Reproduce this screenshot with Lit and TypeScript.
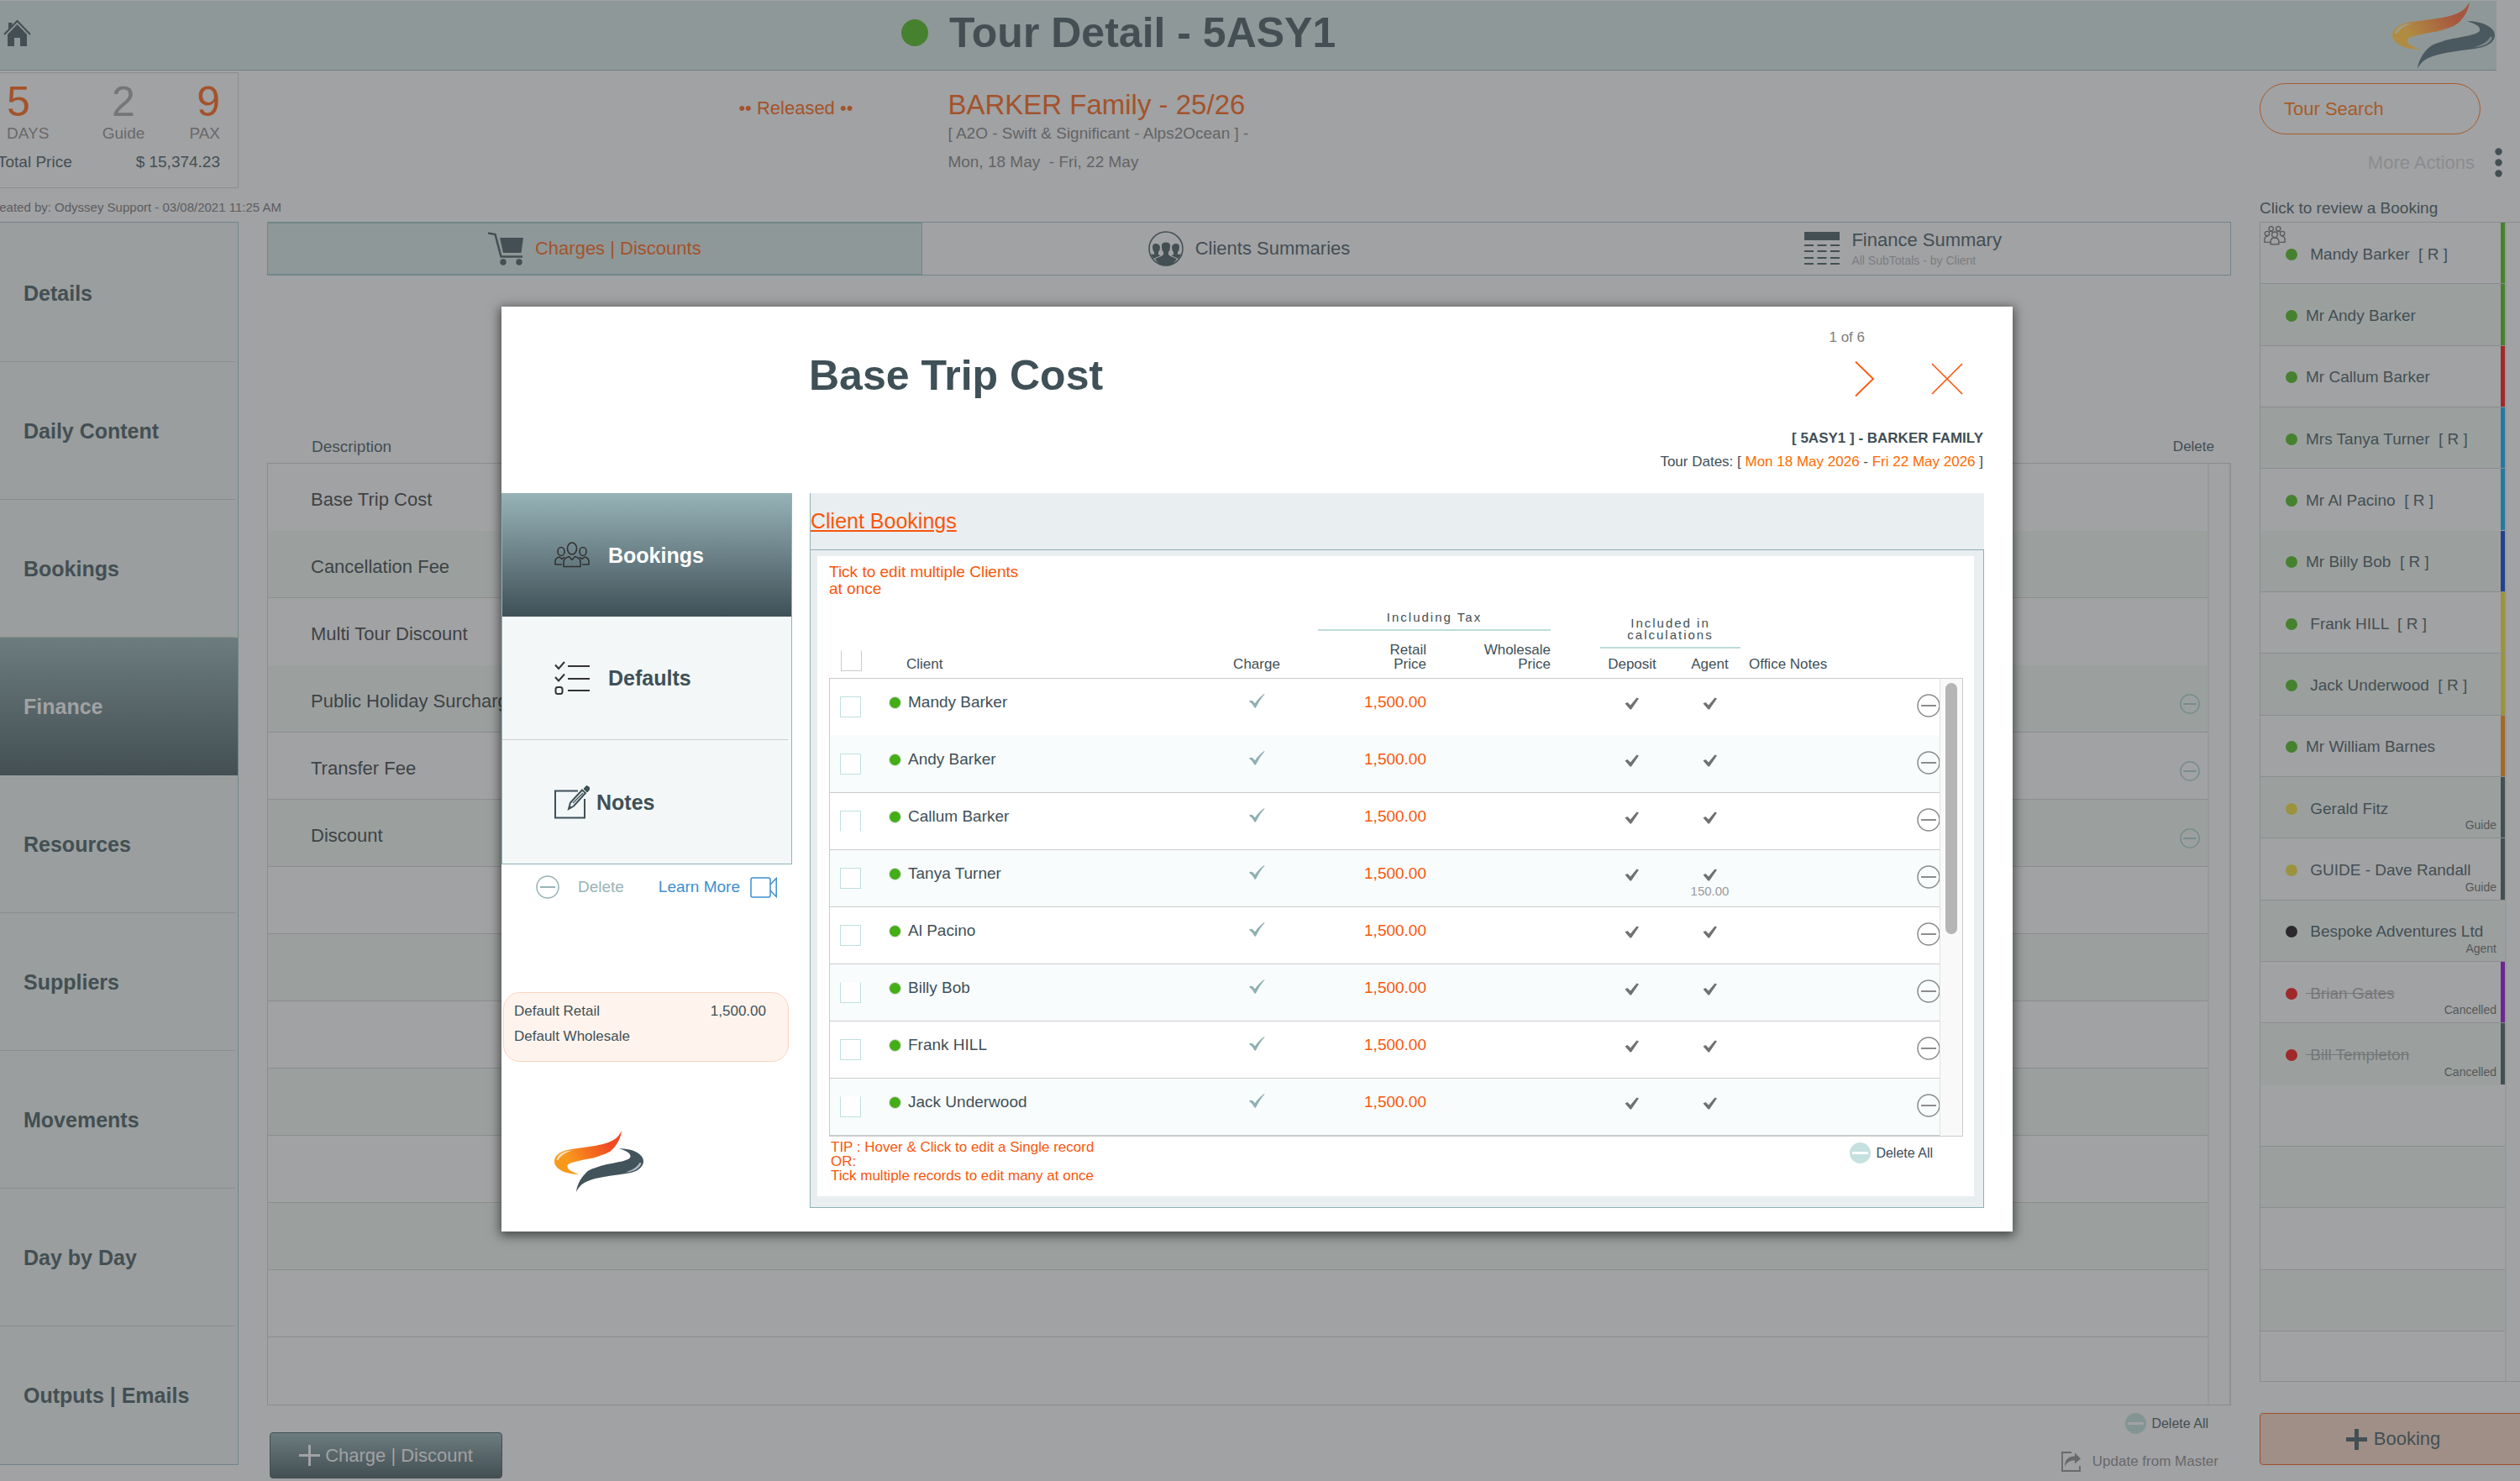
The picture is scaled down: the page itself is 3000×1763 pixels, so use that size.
import { LitElement, html, css, svg, nothing } from "lit";
import { customElement, property } from "lit/decorators.js";
import { classMap } from "lit/directives/class-map.js";
import { styleMap } from "lit/directives/style-map.js";

interface Person {
  name: string;
  dot: string;
  bar?: string;
  note?: string;
  struck?: boolean;
  open?: boolean;
}

interface Charge {
  name: string;
  removable?: boolean;
}

interface Booking {
  name: string;
  agentFee?: string;
  box?: string;
}

const GREEN = "#46812f";
const YELLOW = "#9c933f";
const SLATE = "#434f53";
const RED = "#9f292b";
const SKY = "#27789f";

const SECTIONS = [
  "Details",
  "Daily Content",
  "Bookings",
  "Finance",
  "Resources",
  "Suppliers",
  "Movements",
  "Day by Day",
  "Outputs | Emails",
];

const CHARGES: Charge[] = [
  { name: "Base Trip Cost" },
  { name: "Cancellation Fee" },
  { name: "Multi Tour Discount" },
  { name: "Public Holiday Surcharge", removable: true },
  { name: "Transfer Fee", removable: true },
  { name: "Discount", removable: true },
  ...Array.from({ length: 8 }, () => ({ name: "" })),
];

const PEOPLE: Person[] = [
  { name: "\u00a0Mandy Barker  [ R ]", dot: GREEN, bar: GREEN },
  { name: "Mr Andy Barker", dot: GREEN, bar: GREEN },
  { name: "Mr Callum Barker", dot: GREEN, bar: RED },
  { name: "Mrs Tanya Turner  [ R ]", dot: GREEN, bar: SKY },
  { name: "Mr Al Pacino  [ R ]", dot: GREEN, bar: SKY, open: true },
  { name: "Mr Billy Bob  [ R ]", dot: GREEN, bar: "#24428b" },
  { name: "\u00a0Frank HILL  [ R ]", dot: GREEN, bar: YELLOW },
  { name: "\u00a0Jack Underwood  [ R ]", dot: GREEN, bar: YELLOW },
  { name: "Mr William Barnes", dot: GREEN, bar: "#a16a28" },
  { name: "\u00a0Gerald Fitz", dot: YELLOW, bar: SLATE, note: "Guide" },
  { name: "\u00a0GUIDE - Dave Randall", dot: YELLOW, bar: SLATE, note: "Guide" },
  { name: "\u00a0Bespoke Adventures Ltd", dot: "#2b292d", note: "Agent" },
  { name: "\u00a0Brian Gates", dot: RED, bar: "#6b278f", note: "Cancelled", struck: true },
  { name: "\u00a0Bill Templeton", dot: RED, bar: SLATE, note: "Cancelled", struck: true, open: true },
];

const BOOKINGS: Booking[] = [
  { name: "Mandy Barker" },
  { name: "Andy Barker" },
  { name: "Callum Barker", box: "no-bottom" },
  { name: "Tanya Turner", agentFee: "150.00" },
  { name: "Al Pacino" },
  { name: "Billy Bob", box: "no-top" },
  { name: "Frank HILL" },
  { name: "Jack Underwood", box: "no-top" },
];

const minusIcon = (size: number) => html`
  <svg class="icon" width=${size} height=${size} viewBox="0 0 28 28" fill="none" stroke="currentColor" stroke-width="1.5" aria-hidden="true">
    <circle cx="14" cy="14" r="13" />
    <path d="M5 14H23" stroke-width="2" />
  </svg>`;

const minusDisc = (line: string) => html`
  <svg class="icon" width="25" height="25" viewBox="0 0 25 25" aria-hidden="true">
    <circle cx="12.5" cy="12.5" r="12.5" fill="currentColor" />
    <path d="M3 12.5H22" stroke=${line} stroke-width="3" />
  </svg>`;

const plusIcon = (w: number) => html`
  <svg class="icon" width="25" height="25" viewBox="0 0 25 25" stroke="currentColor" stroke-width=${w} aria-hidden="true">
    <path d="M12.5 0V25M0 12.5H25" />
  </svg>`;

const tickLight = html`
  <svg class="icon" width="19" height="17" viewBox="0 0 19 17" aria-hidden="true">
    <path fill="#8fb0b3" d="M0 9C1 7.200 3 7.500 4.200 8.300L7 11.200C10 7 14 2.500 18 0C18.500 0 18.600 0.600 18.200 1C14 5.500 11 10.500 8 16.500C7 17.200 6.500 16.500 6 15.800C4.500 13 3 11 0 9Z" />
  </svg>`;

const tickDark = html`
  <svg class="icon" width="18" height="15" viewBox="0 0 18 15" aria-hidden="true">
    <path fill="#6f7173" d="M0.500 7.500L3.500 6L7 9.500L14.500 0.500L17 1.500L8 14.500H6.500Z" />
  </svg>`;

const groupOutline = (w: number) => svg`
  <g fill="none" stroke="currentColor" stroke-width=${w} stroke-linejoin="round">
    <ellipse cx="21" cy="8" rx="5.500" ry="7" />
    <path d="M11 29.500V24C11 20 14 18.500 17.500 17.500L21 21.500L24.500 17.500C28 18.500 31 20 31 24V29.500Z" />
    <ellipse cx="8" cy="11.500" rx="4" ry="5" />
    <path d="M9 27H1V23C1 20 3 19 6 18L9 20.500L12 18" />
    <ellipse cx="34" cy="11.500" rx="4" ry="5" />
    <path d="M33 27H41V23C41 20 39 19 36 18L33 20.500L30 18" />
  </g>`;

@customElement("swoosh-logo")
export class SwooshLogo extends LitElement {
  @property({ type: Boolean }) dim = false;

  static styles = css`
    :host {
      display: block;
    }
    svg {
      display: block;
      width: 100%;
      height: 100%;
    }
  `;

  render() {
    const [a, b, c, shine] = this.dim
      ? ["#b08c42", "#a6563f", "#4a5960", "#9ba5a5"]
      : ["#f9991c", "#f04a23", "#43535c", "#ffffff"];
    const blade =
      "M80 0C78 4 75 8.500 70 11C62 15.500 52 17 40 19C30 20.500 20 21.500 14 23C6 25 0 30 0 36C0 45 14 51.500 29 51C23 49 15 46.500 15.500 41.500C16 38 24 36.500 33 34.500C42 32.500 48 32 54 29.500C60 27.500 64 26.500 68 23C73 18.500 79 10 80 0Z";
    const slit = "M2.500 34C4 28 11 23.500 22 23C14 25.500 8 28.500 4.500 34.500Z";
    return html`
      <svg viewBox="0 0 106 72" preserveAspectRatio="none" role="img" aria-label="Logo">
        <defs>
          <linearGradient id="warm" x1="0" x2="1" y1="0.600" y2="0.200">
            <stop offset="0.150" stop-color=${a} />
            <stop offset="0.800" stop-color=${b} />
          </linearGradient>
        </defs>
        <path d=${blade} fill="url(#warm)" />
        <path d=${slit} fill=${shine} opacity="0.700" />
        <g transform="rotate(180 53 36)">
          <path d=${blade} fill=${c} />
          <path d=${slit} fill=${shine} opacity="0.600" />
        </g>
      </svg>`;
  }
}

@customElement("charge-dialog")
export class ChargeDialog extends LitElement {
  static styles = css`
    :host {
      display: block;
      background: #ffffff;
      color: #3f5057;
      font: 17px/28px "Liberation Sans", Arial, sans-serif;
      box-shadow: 0 3px 12px 2px rgba(0, 0, 0, 0.55);
    }
    * {
      box-sizing: border-box;
    }
    button,
    input {
      font: inherit;
      color: inherit;
      margin: 0;
    }
    button {
      background: none;
      border: 0;
      padding: 0;
      cursor: pointer;
    }
    a {
      color: inherit;
    }
    p,
    h2,
    h3 {
      margin: 0;
    }
    .icon {
      display: block;
      flex: none;
    }
    .head {
      display: flex;
      justify-content: space-between;
      padding: 27px 35px 23px 366px;
    }
    .title {
      font-size: 50px;
      line-height: 60px;
      padding-top: 25px;
    }
    .side {
      display: flex;
      flex-direction: column;
      align-items: flex-end;
    }
    .count {
      color: #7d7d7d;
      line-height: 20px;
      padding-right: 141px;
    }
    .tools {
      display: flex;
      align-items: center;
      gap: 67px;
      color: #f9560b;
      padding: 18px 24px 36px 0;
    }
    .date {
      color: #ff6a00;
    }
    .body {
      display: grid;
      grid-template-columns: 346px minmax(0, 1fr);
      gap: 21px;
      padding: 0 34px 28px 0;
    }
    .menu {
      display: grid;
      grid-auto-rows: 147px;
      background: #f3f7f8;
      border: 1px solid #8fb3b8;
      border-top: 0;
    }
    .menu a {
      display: flex;
      align-items: center;
      gap: 22px;
      padding-left: 62px;
      font-size: 25px;
      font-weight: bold;
      text-decoration: none;
    }
    .menu a.active {
      color: #ffffff;
      background: linear-gradient(#97b3b8, #3f5057);
    }
    .menu a.active .icon,
    .menu .ink {
      color: #333333;
    }
    .menu a.ruled {
      border-bottom: 1px solid #cdcfd1;
      margin-right: 4px;
    }
    .menu a.near {
      gap: 8px;
    }
    .links {
      display: flex;
      align-items: center;
      padding: 13px 18px 0 41px;
      font-size: 19px;
      color: #98b4b6;
    }
    .links button {
      display: flex;
      align-items: center;
      gap: 22px;
    }
    .links a {
      display: flex;
      align-items: center;
      gap: 12px;
      margin-left: auto;
      color: #3d8fcf;
      text-decoration: none;
    }
    .defaults {
      display: grid;
      grid-template-columns: 1fr auto;
      margin: 111px 4px 0 2px;
      padding: 7px 26px 14px 12px;
      line-height: 30px;
      background: #fff4ed;
      border: 1px solid #fad4c2;
      border-radius: 20px;
    }
    .logo {
      width: 106px;
      height: 73px;
      margin: 82px 0 0 63px;
    }
    .panel {
      background: #e9eef1;
      border-left: 1px solid #8fb0b3;
    }
    .bar {
      font-size: 25px;
      font-weight: normal;
      line-height: 67px;
      color: #f9560b;
      text-decoration: underline;
      text-underline-offset: 2px;
    }
    .frame {
      border: solid #8fb0b3;
      border-width: 1px 1px 1px 0;
      padding: 7px 11px 13px 8px;
    }
    .sheet {
      background: #ffffff;
      padding: 9px 13px 16px 14px;
    }
    .hint {
      font-size: 19px;
      line-height: 20px;
      color: #f9560b;
    }
    .listing {
      display: grid;
      grid-template-columns: minmax(0, 1fr) 28px;
    }
    table,
    thead {
      display: block;
    }
    tr {
      display: grid;
      grid-template-columns: 68px minmax(0, 1fr) 92px 156px 148px 143px 93px 200px 27px;
    }
    th,
    td {
      display: block;
      padding: 0;
      text-align: left;
      font-weight: normal;
    }
    thead tr {
      grid-template-rows: 40px 56px;
      line-height: 17px;
    }
    thead th {
      grid-row: 2;
      align-self: end;
      padding-bottom: 8px;
    }
    thead .group {
      grid-row: 1;
      align-self: end;
      font-size: 15px;
      line-height: 14px;
      letter-spacing: 2px;
      text-align: center;
      padding-bottom: 7px;
      border-bottom: 2px solid #bcdcda;
    }
    .tax {
      grid-column: 4 / 6;
      margin-left: 27px;
    }
    thead .calc {
      grid-column: 6 / 8;
      grid-row: 1 / 3;
      align-self: start;
      margin: 24px 10px 0 59px;
    }
    .c1 {
      grid-column: 1;
    }
    .c2 {
      grid-column: 2;
    }
    .c3 {
      grid-column: 3;
    }
    .c4 {
      grid-column: 4;
    }
    .c5 {
      grid-column: 5;
    }
    .c6 {
      grid-column: 6;
    }
    .c7 {
      grid-column: 7;
    }
    .c8 {
      grid-column: 8;
    }
    .client {
      display: flex;
      align-items: center;
      gap: 9px;
    }
    thead .client {
      padding-left: 24px;
    }
    .mid {
      text-align: center;
    }
    .end {
      text-align: right;
    }
    .dep {
      padding-left: 51px;
    }
    tbody {
      display: grid;
      grid-auto-rows: 68px;
      border: 1px solid #cbcbcb;
      border-right: 0;
    }
    tbody tr {
      border-bottom: 1px solid #cbcbcb;
      font-size: 19px;
      line-height: 24px;
    }
    tbody tr:nth-child(even) {
      background: #f8fcfd;
    }
    tbody tr:first-child {
      border-bottom-color: #f8fcfd;
    }
    tbody td,
    tbody th {
      padding-top: 16px;
    }
    tbody .client {
      align-self: start;
      padding-left: 3px;
    }
    .dot {
      width: 13px;
      height: 13px;
      border-radius: 50%;
      background: #43ae16;
      box-shadow: 0 0 0 1px #d5ddd5;
    }
    .box {
      appearance: none;
      display: block;
      width: 25px;
      height: 25px;
      border: 1px solid #bfe0de;
      background: #ffffff;
      margin: 5px 0 0 12px;
    }
    thead .box {
      border-color: #cbcbcb;
      margin: 0 0 0 14px;
    }
    .no-top,
    thead .no-top {
      border-top-color: transparent;
    }
    .no-bottom {
      border-bottom-color: transparent;
    }
    .charge .icon,
    .dark .icon {
      margin: 0 auto;
    }
    tbody .charge {
      padding-top: 18px;
    }
    tbody .dark {
      padding-top: 22px;
    }
    .price {
      color: #f9560b;
    }
    .fee {
      display: block;
      margin-top: 4px;
      font-size: 15px;
      line-height: 16px;
      text-align: center;
      color: #9a9a9a;
    }
    tbody .del {
      overflow: hidden;
      color: #8c8c8c;
      padding-top: 18px;
    }
    .track {
      margin-top: 96px;
      padding: 5px 6px;
      background: #f9f9f9;
      border: 1px solid #cbcbcb;
      border-left-color: #e2e2e2;
    }
    .thumb {
      height: 56%;
      border-radius: 7px;
      background: #b5b5b5;
    }
    .foot {
      display: flex;
      justify-content: space-between;
      align-items: flex-start;
      padding: 4px 36px 0 2px;
    }
    .tip {
      line-height: 17px;
      color: #f9560b;
    }
    .all {
      display: flex;
      align-items: center;
      gap: 6px;
      padding-top: 3px;
      font-size: 16px;
      line-height: 25px;
      color: #3b4c5b;
    }
    .all .icon {
      color: #c5e1df;
    }
  `;

  render() {
    return html`
      <header class="head">
        <h2 class="title">Base Trip Cost</h2>
        <div class="side">
          <p class="count">1 of 6</p>
          <div class="tools">
            <button aria-label="Next charge">
              <svg class="icon" width="24" height="42" viewBox="0 0 24 42" fill="none" stroke="currentColor" stroke-width="1.800"><path d="M1 0.500L22 21L1 41.500" /></svg>
            </button>
            <button aria-label="Close">
              <svg class="icon" width="38" height="38" viewBox="0 0 38 38" fill="none" stroke="currentColor" stroke-width="1.600"><path d="M1 1L37 37M37 1L1 37" /></svg>
            </button>
          </div>
          <strong>[ 5ASY1 ] - BARKER FAMILY</strong>
          <p>Tour Dates: [ <span class="date">Mon 18 May 2026</span> - <span class="date">Fri 22 May 2026</span> ]</p>
        </div>
      </header>
      <div class="body">
        <aside>
          <nav class="menu" aria-label="Charge sections">
            <a class="active" href="#bookings">
              <svg class="icon" width="42" height="31" viewBox="0 0 42 31" aria-hidden="true">${groupOutline(1.6)}</svg>
              Bookings
            </a>
            <a class="ruled" href="#defaults">
              <svg class="icon ink" width="42" height="40" viewBox="0 0 42 40" fill="none" stroke="currentColor" stroke-width="2" aria-hidden="true">
                <path d="M16 6H42M16 21H42M16 35H42" stroke-width="2.200" />
                <path d="M1 4.500L5 9L12 1M1 19L5 23.500L12 15.500" />
                <rect x="1.500" y="31" width="8" height="8" rx="2.500" />
              </svg>
              Defaults
            </a>
            <a class="near" href="#notes">
              <svg class="icon" width="42" height="40" viewBox="0 0 42 40" fill="none" stroke="currentColor" aria-hidden="true">
                <path d="M28 6.500H1V38.500H36V16" stroke-width="2" />
                <path d="M17 28L19 20.500L33 5.500L37 9L23 24.500Z" stroke-width="2" />
                <path d="M22 21L34 9" stroke-width="1.200" />
                <path d="M17 28L18 24L20.500 26.500Z" fill="currentColor" />
                <path d="M35 4L38 0.500Q42 1 42 4.500L39 8Z" fill="currentColor" />
              </svg>
              Notes
            </a>
          </nav>
          <div class="links">
            <button>${minusIcon(28)}Delete</button>
            <a href="#learn">Learn More
              <svg class="icon" width="32" height="25" viewBox="0 0 32 25" fill="none" stroke="currentColor" stroke-width="1.500" aria-hidden="true">
                <rect x="1" y="1" width="23" height="23" rx="2" />
                <path d="M24 9L31.200 1.500V23.500L24 16" />
              </svg>
            </a>
          </div>
          <div class="defaults">
            <span>Default Retail</span><span>1,500.00</span>
            <span>Default Wholesale</span>
          </div>
          <swoosh-logo class="logo"></swoosh-logo>
        </aside>
        <section class="panel">
          <h3 class="bar">Client Bookings</h3>
          <div class="frame">
            <div class="sheet">
              <p class="hint">Tick to edit multiple Clients<br />at once</p>
              <div class="listing">
                <table>
                  <thead>
                    <tr>
                      <th class="c1"><input class="box no-top" type="checkbox" aria-label="Select all clients" /></th>
                      <th class="c2 client">Client</th>
                      <th class="c3 mid">Charge</th>
                      <th class="group tax" scope="colgroup">Including Tax</th>
                      <th class="c4 end">Retail<br />Price</th>
                      <th class="c5 end">Wholesale<br />Price</th>
                      <th class="group calc" scope="colgroup">Included in calculations</th>
                      <th class="c6 mid dep">Deposit</th>
                      <th class="c7 mid">Agent</th>
                      <th class="c8">Office Notes</th>
                    </tr>
                  </thead>
                  <tbody>
                    ${BOOKINGS.map(
                      (b) => html`
                        <tr>
                          <td><input class="box ${b.box ?? ""}" type="checkbox" aria-label="Select ${b.name}" /></td>
                          <th class="client" scope="row"><span class="dot"></span>${b.name}</th>
                          <td class="charge">${tickLight}</td>
                          <td class="end price">1,500.00</td>
                          <td></td>
                          <td class="dark dep">${tickDark}</td>
                          <td class="dark">${tickDark}${b.agentFee ? html`<span class="fee">${b.agentFee}</span>` : nothing}</td>
                          <td></td>
                          <td class="del"><button aria-label="Remove ${b.name}">${minusIcon(28)}</button></td>
                        </tr>`
                    )}
                  </tbody>
                </table>
                <div class="track"><div class="thumb"></div></div>
              </div>
              <div class="foot">
                <p class="tip">TIP : Hover &amp; Click to edit a Single record<br />OR:<br />Tick multiple records to edit many at once</p>
                <button class="all">${minusDisc("#ffffff")}Delete All</button>
              </div>
            </div>
          </div>
        </section>
      </div>
    `;
  }
}

@customElement("app-root")
export class AppRoot extends LitElement {
  static styles = css`
    :host {
      display: block;
      background: #a1a2a4;
      color: #434f53;
      font: 19px/24px "Liberation Sans", Arial, sans-serif;
    }
    * {
      box-sizing: border-box;
    }
    button,
    input {
      font: inherit;
      color: inherit;
      margin: 0;
    }
    button {
      background: none;
      border: 0;
      padding: 0;
      cursor: pointer;
    }
    p,
    h1,
    h2,
    ul {
      margin: 0;
      padding: 0;
      font-weight: normal;
    }
    ul {
      list-style: none;
    }
    .icon {
      display: block;
      flex: none;
    }
    .page {
      position: relative;
      display: flex;
      flex-direction: column;
      min-height: 100vh;
      overflow: hidden;
    }
    .top {
      display: grid;
      grid-template-columns: 36fr 60fr auto;
      align-items: center;
      height: 83px;
      margin: 1px 28px 0 0;
      padding-right: 2px;
      background: #8f9898;
      border-bottom: 1px solid #6f8083;
    }
    .home {
      padding: 0 0 6px 4px;
      color: #434f53;
    }
    .heading {
      display: flex;
      align-items: center;
      gap: 25px;
      padding-bottom: 6px;
      margin-left: 5px;
      font-size: 50px;
      line-height: 60px;
      font-weight: bold;
    }
    .status {
      width: 32px;
      height: 32px;
      border-radius: 50%;
      background: #46812f;
    }
    .logo {
      width: 122px;
      height: 80px;
    }
    .cols {
      display: grid;
      grid-template-columns: 284px minmax(0, 1fr) 310px;
      column-gap: 34px;
    }
    .info {
      height: 180px;
    }
    .stats {
      display: grid;
      grid-template-columns: 113px 52px 1fr;
      margin-top: 2px;
      padding: 9px 21px 18px 8px;
      border: solid #8c8d8f;
      border-width: 1px 1px 1px 0;
      color: #68696b;
    }
    .num {
      font-size: 50px;
      line-height: 51px;
    }
    .hot {
      color: #a3532b;
    }
    .soft {
      color: #757678;
    }
    .c {
      text-align: center;
    }
    .r {
      text-align: right;
    }
    .total {
      grid-column: 1 / -1;
      display: flex;
      justify-content: space-between;
      margin: 10px 0 0 -11px;
      color: #434f53;
    }
    .made {
      display: flex;
      justify-content: flex-end;
      width: 335px;
      padding-top: 11px;
      font-size: 15px;
      color: #5c5d5f;
      white-space: nowrap;
    }
    .trip {
      display: grid;
      grid-template-columns: 30fr 70fr;
      color: #626466;
    }
    .released {
      text-align: right;
      font-size: 22px;
      padding: 33px 4px 0 0;
    }
    .about {
      padding: 21px 0 0 109px;
    }
    .about h2 {
      font-size: 33px;
      line-height: 40px;
      padding-bottom: 2px;
    }
    .about p {
      white-space: pre;
      padding-bottom: 10px;
    }
    .find {
      padding-top: 15px;
    }
    .search {
      display: block;
      width: 263px;
      height: 61px;
      padding: 0 28px;
      font-size: 22px;
      background: none;
      border: 1px solid #a65c29;
      border-radius: 31px;
    }
    .search::placeholder {
      color: #a65c29;
      opacity: 1;
    }
    .more {
      display: flex;
      align-items: center;
      gap: 24px;
      margin: 16px 0 0 auto;
      padding-right: 21px;
      font-size: 22px;
      line-height: 34px;
      color: #8b8c8e;
    }
    .more .icon {
      color: #434f53;
    }
    .review {
      padding-top: 25px;
      line-height: 24px;
    }
    .main {
      flex: 1;
    }
    .nav {
      display: grid;
      grid-auto-rows: 1fr;
      margin-bottom: 19px;
      padding-top: 2px;
      background: #9a9e9e;
      border: solid #71868a;
      border-width: 1px 1px 1px 0;
    }
    .nav a {
      display: flex;
      align-items: center;
      padding-left: 28px;
      margin-right: 3px;
      font-size: 25px;
      font-weight: bold;
      color: inherit;
      text-decoration: none;
      border-bottom: 1px solid #8a8d8f;
    }
    .nav a:last-child {
      border-bottom-color: transparent;
    }
    .nav a.active {
      margin-right: 0;
      color: #a1a2a4;
      border: 0;
      background: linear-gradient(#6c7c7f, #434f53);
    }
    .work {
      display: flex;
      flex-direction: column;
    }
    .tabs {
      display: grid;
      grid-template-columns: repeat(3, 1fr);
      height: 64px;
      border: 1px solid #71868a;
    }
    .tabs button {
      display: flex;
      align-items: center;
      justify-content: center;
      gap: 14px;
      font-size: 22px;
      text-align: left;
    }
    .tabs .active {
      color: #a3532b;
      background: #8f9898;
      border: solid #71868a;
      border-width: 1px 1px 1px 0;
    }
    .tabs .active .icon {
      color: #434f53;
    }
    .tabs small {
      display: block;
      margin-top: 3px;
      font-size: 14px;
      line-height: 18px;
      color: #7c7d7f;
    }
    .caption {
      display: flex;
      justify-content: space-between;
      padding: 192px 20px 7px 53px;
    }
    .caption span:last-child {
      font-size: 17px;
    }
    .rows {
      flex: 1;
      display: grid;
      grid-template-columns: minmax(0, 1fr) 27px;
      border: 1px solid #8b8c8e;
    }
    .rows ul {
      display: grid;
      grid-auto-rows: 1fr;
    }
    .rows li {
      display: flex;
      align-items: center;
      justify-content: space-between;
      padding: 6px 9px 0 51px;
      font-size: 22px;
      color: #3e4345;
      border-bottom: 1px solid #8b8c8e;
    }
    .rows li button {
      margin-top: 7px;
      color: #72888a;
    }
    .rows li:nth-child(even) {
      background: #9ba09f;
    }
    .rows li:nth-child(1),
    .rows li:nth-child(3) {
      border-color: transparent;
    }
    .rows li:nth-child(14) {
      background: none;
      border: 0;
    }
    .gutter {
      border: solid #98999b;
      border-width: 0 2px;
    }
    .foot {
      display: flex;
      justify-content: space-between;
      align-items: flex-start;
      height: 90px;
      padding: 0 15px 0 3px;
    }
    .add {
      display: flex;
      align-items: center;
      justify-content: center;
      gap: 6px;
      width: 277px;
      height: 55px;
      margin-top: 32px;
      font-size: 22px;
      color: #a1a2a4;
      background: linear-gradient(#6c7c7f, #434f53);
      border: 1px solid #434f53;
      border-radius: 4px;
    }
    .acts {
      display: flex;
      flex-direction: column;
      align-items: flex-end;
      gap: 20px;
      padding-top: 9px;
    }
    .acts button {
      display: flex;
      align-items: center;
      gap: 6px;
      font-size: 16px;
      line-height: 25px;
    }
    .acts .first {
      margin-right: 12px;
    }
    .acts .first .icon {
      color: #839593;
    }
    .acts .second {
      gap: 13px;
      font-size: 17px;
      color: #68696b;
    }
    .people {
      flex: 1;
      display: grid;
      grid-template-columns: minmax(0, 1fr) 18px;
      border: solid #8b8c8e;
      border-width: 1px 0 1px 1px;
    }
    .people ul {
      display: grid;
      grid-template-rows: repeat(18, 1fr) 59px;
    }
    .people li {
      position: relative;
      display: flex;
      align-items: center;
      gap: 10px;
      padding: 3px 0 0 30px;
      border-bottom: 1px solid #8b8c8e;
      white-space: pre;
    }
    .people li:nth-child(even) {
      background: #9ba09f;
    }
    .people li.open {
      border-color: transparent;
    }
    .people li:last-child {
      border: 0;
    }
    .people .edge {
      border-left: 2px solid #98999b;
    }
    .dot {
      width: 14px;
      height: 14px;
      border-radius: 50%;
    }
    .stripe {
      position: absolute;
      right: 0;
      top: 0;
      bottom: 0;
      width: 5px;
    }
    .note {
      position: absolute;
      right: 10px;
      bottom: 5px;
      font-size: 14px;
      line-height: 20px;
      color: #55585a;
    }
    .struck {
      color: #757678;
      text-decoration: line-through;
    }
    .crowd {
      position: absolute;
      left: 4px;
      top: 4px;
      color: #5c5d5f;
    }
    .book {
      display: flex;
      align-items: center;
      justify-content: center;
      gap: 8px;
      height: 62px;
      margin: 37px -8px 19px 0;
      font-size: 22px;
      background: #9f8f87;
      border: 1px solid #a04f29;
      border-radius: 4px;
    }
    .overlay {
      position: absolute;
      inset: 0;
      padding: 365px 604px 0 597px;
    }
  `;

  private person(p: Person | undefined, i: number) {
    if (!p) return html`<li></li>`;
    return html`
      <li class=${classMap({ open: !!p.open })}>
        ${i === 0
          ? html`<svg class="crowd" width="26" height="23" viewBox="0 0 42 38" fill="none" stroke="currentColor" stroke-width="2.400" aria-hidden="true">
              <circle cx="14" cy="5.500" r="4.500" /><circle cx="28" cy="5.500" r="4.500" />
              <circle cx="6" cy="15" r="4.500" /><circle cx="36" cy="15" r="4.500" /><circle cx="21" cy="17" r="5.500" />
              <path d="M13 36V29Q14 23 21 23T29 29V36ZM12 32H1V25Q2 20 8 20M30 32H41V25Q40 20 34 20M10 11Q14 9 17 12M32 11Q28 9 25 12" />
            </svg>`
          : nothing}<span class="dot" style=${styleMap({ background: p.dot })}></span><span class=${classMap({ struck: !!p.struck })}>${p.name}</span>
        ${p.note ? html`<span class="note">${p.note}</span>` : nothing}
        ${p.bar ? html`<span class="stripe" style=${styleMap({ background: p.bar })}></span>` : nothing}
      </li>`;
  }

  render() {
    return html`
      <div class="page">
        <header class="top">
          <a class="home" href="#home" aria-label="Home">
            <svg class="icon" width="33" height="32" viewBox="0 0 33 32" aria-hidden="true">
              <path d="M1 18L16.500 2L32 18" fill="none" stroke="currentColor" stroke-width="2" />
              <path d="M6 4H10.500V7L6 11.500Z" fill="currentColor" />
              <path d="M16.500 6L28 18V32H20V22H13V32H5V18Z" fill="currentColor" />
            </svg>
          </a>
          <h1 class="heading"><span class="status"></span>Tour Detail - 5ASY1</h1>
          <swoosh-logo class="logo" dim></swoosh-logo>
        </header>

        <div class="cols info">
          <div>
            <div class="stats">
              <span class="num hot">5</span><span class="num soft c">2</span><span class="num hot r">9</span>
              <span>DAYS</span><span class="c">Guide</span><span class="r">PAX</span>
              <div class="total"><span>Total Price</span><span>$ 15,374.23</span></div>
            </div>
            <div class="made">Created by: Odyssey Support - 03/08/2021 11:25 AM</div>
          </div>
          <div class="trip">
            <p class="released hot">•• Released ••</p>
            <div class="about">
              <h2 class="hot">BARKER Family - 25/26</h2>
              <p>[ A2O - Swift &amp; Significant - Alps2Ocean ] -</p>
              <p>Mon, 18 May  - Fri, 22 May</p>
            </div>
          </div>
          <div class="find">
            <input class="search" type="text" placeholder="Tour Search" aria-label="Tour Search" />
            <button class="more">More Actions
              <svg class="icon" width="9" height="35" viewBox="0 0 9 35" fill="currentColor" aria-hidden="true"><circle cx="4.500" cy="4.500" r="4.200" /><circle cx="4.500" cy="17.500" r="4.200" /><circle cx="4.500" cy="30.500" r="4.200" /></svg>
            </button>
            <p class="review">Click to review a Booking</p>
          </div>
        </div>

        <main class="cols main">
          <nav class="nav" aria-label="Tour sections">
            ${SECTIONS.map((s) => html`<a href="#section" class=${classMap({ active: s === "Finance" })}>${s}</a>`)}
          </nav>

          <section class="work">
            <div class="tabs">
              <button class="active">
                <svg class="icon" width="42" height="40" viewBox="0 0 42 40" aria-hidden="true">
                  <path d="M0 1.500L8.500 3L15.500 29.500H41" fill="none" stroke="currentColor" stroke-width="2.500" />
                  <path d="M14 7H42L39.500 25H18Z" fill="currentColor" />
                  <circle cx="18" cy="36" r="3.700" fill="currentColor" /><circle cx="37" cy="36" r="3.700" fill="currentColor" />
                </svg>
                Charges | Discounts
              </button>
              <button>
                <svg class="icon" width="42" height="42" viewBox="0 0 42 42" fill="currentColor" aria-hidden="true">
                  <circle cx="21" cy="21" r="20" fill="none" stroke="currentColor" stroke-width="1.500" />
                  <path d="M16 19Q15 13.500 21 13.500T26 19Q26 23 24 25V28Q25 30 34 33Q29 41.500 21 41.500T8 33Q17 30 18 28V25Q16 23 16 19Z" />
                  <path d="M5 19Q5 15 9 15T14 19Q14 23 12 25V28L14.500 29.500Q9 31 6 33Q3 28 3 27.500L7 28V25Q5 23 5 19ZM37 19Q37 15 33 15T28 19Q28 23 30 25V28L27.500 29.500Q33 31 36 33Q39 28 39 27.500L35 28V25Q37 23 37 19Z" />
                </svg>
                Clients Summaries
              </button>
              <button>
                <svg class="icon" width="42" height="40" viewBox="0 0 42 40" aria-hidden="true">
                  <path d="M0 0H42V10H0Z" fill="currentColor" />
                  <path d="M0 16H42M0 23H42M0 31H42M0 38H42" stroke="currentColor" stroke-width="2" stroke-dasharray="11 4.500" />
                </svg>
                <span>Finance Summary<small>All SubTotals - by Client</small></span>
              </button>
            </div>
            <div class="caption"><span>Description</span><span>Delete</span></div>
            <div class="rows">
              <ul>
                ${CHARGES.map(
                  (c) => html`<li><span>${c.name}</span>${c.removable ? html`<button aria-label="Delete ${c.name}">${minusIcon(24)}</button>` : nothing}</li>`
                )}
              </ul>
              <div class="gutter"></div>
            </div>
            <div class="foot">
              <button class="add">${plusIcon(3)}Charge | Discount</button>
              <div class="acts">
                <button class="first">${minusDisc("#a1a2a4")}Delete All</button>
                <button class="second">
                  <svg class="icon" width="24" height="24" viewBox="0 0 24 24" aria-hidden="true">
                    <path d="M12 1H1V23H22V17" fill="none" stroke="currentColor" stroke-width="1.800" />
                    <path d="M4 18C4 9 9 5.500 16 5.500V1.500L23 8.500L16 14.500V10.500C10 10.500 6.500 12.500 4 18Z" fill="currentColor" />
                  </svg>
                  Update from Master
                </button>
              </div>
            </div>
          </section>

          <aside class="work">
            <div class="people">
              <ul>
                ${Array.from({ length: 19 }, (_, i) => this.person(PEOPLE[i], i))}
              </ul>
              <div class="edge"></div>
            </div>
            <button class="book">${plusIcon(5)}Booking</button>
          </aside>
        </main>

        <div class="overlay">
          <charge-dialog role="dialog" aria-label="Base Trip Cost"></charge-dialog>
        </div>
      </div>
    `;
  }
}
